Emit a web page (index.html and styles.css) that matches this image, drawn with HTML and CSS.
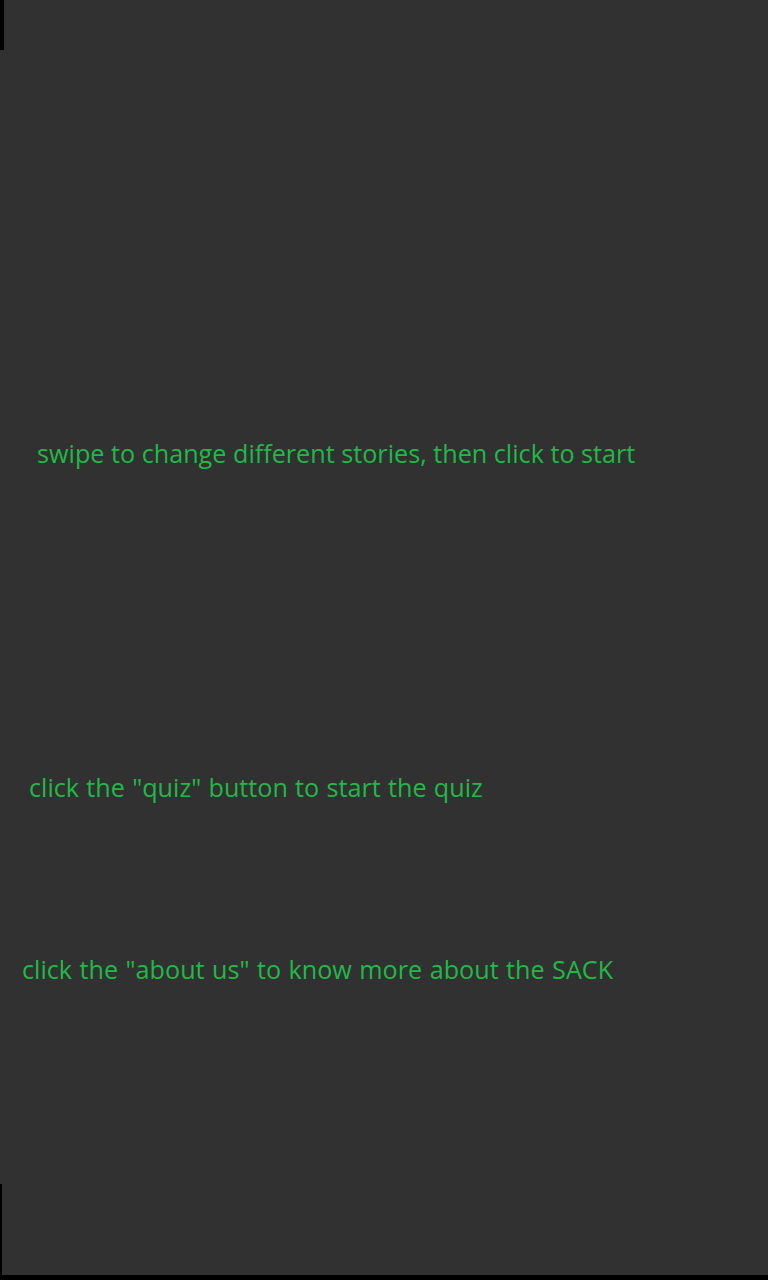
FILE: index.html
```html
<!DOCTYPE html>
<html>
<head>
<meta charset="utf-8">
<link rel="stylesheet" href="styles.css">
</head>
<body>
<div class="screen">
  <div class="edge-top"></div>
  <p class="hint hint-swipe">swipe to change different stories, then click to start</p>
  <p class="hint hint-quiz">click the "quiz" button to start the quiz</p>
  <p class="hint hint-about">click the "about us" to know more about the SACK</p>
  <div class="edge-bottom">
    <div class="edge-left"></div>
    <div class="edge-floor"></div>
  </div>
</div>
</body>
</html>
```
FILE: styles.css
```css
html, body {
  margin: 0;
  padding: 0;
  background: #313131;
}
.screen {
  width: 768px;
  height: 1280px;
  display: flex;
  flex-direction: column;
  background: #313131;
}
.edge-top {
  width: 4px;
  height: 50px;
  background: #000;
  flex: none;
}
.hint {
  margin: 0;
  font-family: "Open Sans", "Noto Sans", sans-serif;
  font-size: 25.2px;
  line-height: 32px;
  color: #20b947;
  white-space: nowrap;
}
.hint-swipe {
  margin-top: 387px;
  padding-left: 37px;
}
.hint-quiz {
  margin-top: 302px;
  padding-left: 29px;
  word-spacing: 0.7px;
}
.hint-about {
  margin-top: 150px;
  padding-left: 22px;
  word-spacing: 0.9px;
}
.edge-bottom {
  margin-top: auto;
  display: flex;
  flex-direction: column;
}
.edge-left {
  width: 2px;
  height: 91px;
  background: #000;
}
.edge-floor {
  height: 5px;
  background: #000;
}
```
